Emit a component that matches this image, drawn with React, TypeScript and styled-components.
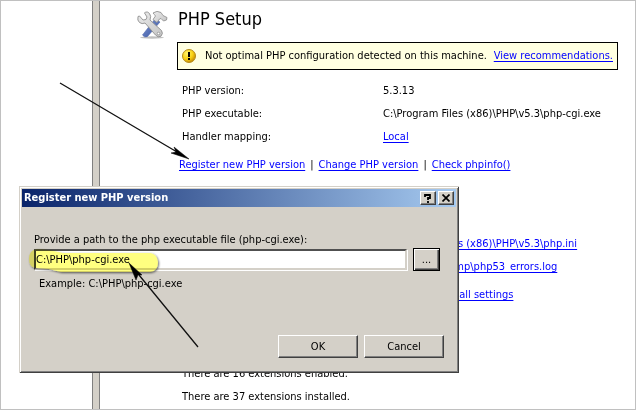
import React from "react";
import styled, { createGlobalStyle, css } from "styled-components";

const font = '"DejaVu Sans Condensed", "DejaVu Sans", sans-serif';

const GlobalStyle = createGlobalStyle`
  * { box-sizing: border-box; }
  body { margin: 0; background: #fff; color: #000; font: 11px/16px ${font}; }
  h1, h2, p, dl, dd { margin: 0; }
  button, input { font: inherit; color: inherit; }
`;

const Page = styled.div`
  position: relative;
  display: grid;
  grid-template-columns: 91px 8px minmax(0, 1fr);
  min-height: 100vh;
  border: 1px solid #c0c0c0;
  overflow: hidden;
  white-space: nowrap;
`;

const Splitter = styled.div`
  background: #d4d0c8;
  border: solid #808080;
  border-width: 0 1px;
`;

const Feature = styled.main`
  display: grid;
  grid-template-columns: 32px minmax(0, 1fr);
  column-gap: 9px;
  padding: 5px 17px 0 36px;
  align-content: start;
`;

const ToolsIcon = styled.svg`
  margin-top: 3px;
`;

const Title = styled.h1`
  padding-left: 1px;
  font-size: 18px;
  line-height: 26px;
  font-weight: 400;
`;

const Banner = styled.p`
  display: flex;
  align-items: center;
  height: 28px;
  margin: 10px 0 9px;
  padding: 0 4px;
  border: 1px solid #000;
  background: #ffffe1;

  svg { margin-right: 9px; }
  a { margin-left: auto; }
`;

const Link = styled.a`
  color: #00f;
  text-decoration: underline;
  text-underline-offset: 2px;
`;

const Properties = styled.dl`
  padding-left: 5px;
`;

const Property = styled.div`
  display: grid;
  grid-template-columns: 201px minmax(0, 1fr);
  line-height: 23px;
`;

const Tasks = styled.p<{ $inset?: boolean }>`
  display: flex;
  gap: ${(p) => (p.$inset ? 4 : 5)}px;
  padding: 5px 0 4px ${(p) => (p.$inset ? 5 : 2)}px;
  line-height: 23px;
`;

const Heading = styled.h2`
  padding: 16px 0 12px 5px;
  font-size: 12px;
  line-height: 24px;
  font-weight: 700;
`;

const Fact = styled.p`
  padding-left: 5px;
  line-height: 23px;
`;

const raised = css`
  border: 1px solid;
  border-color: #fff #404040 #404040 #fff;
  box-shadow: inset -1px -1px #808080;
  background: #d4d0c8;
`;

const Dialog = styled.form`
  position: absolute;
  left: 18px;
  top: 185px;
  width: 440px;
  padding: 3px 3px 15px;
  background: #d4d0c8;
  box-shadow: inset 1px 1px #d4d0c8, inset -1px -1px #404040, inset 2px 2px #fff, inset -2px -2px #808080;
`;

const TitleBar = styled.header`
  display: flex;
  align-items: center;
  gap: 2px;
  height: 18px;
  padding: 0 2px;
  background: linear-gradient(90deg, #0a246a, #a6caf0);
  color: #fff;

  h2 { flex: 1; font: inherit; font-weight: 700; }
`;

const CaptionButton = styled.button`
  ${raised}
  display: grid;
  place-items: center;
  width: 16px;
  height: 14px;
  padding: 0;
  color: #000;
`;

const DialogBody = styled.div`
  padding: 25px 12px 0;
`;

const Field = styled.div`
  display: flex;
  align-items: center;
  gap: 6px;
  padding-right: 4px;

  input {
    flex: 1;
    min-width: 0;
    height: 21px;
    padding: 0;
    outline: 0;
    background: #fff;
    border: 2px solid;
    border-color: #505050 #d4d0c8 #d4d0c8 #404040;
    box-shadow: 1px 1px #fff;
  }
`;

const BrowseButton = styled.button`
  width: 27px;
  height: 23px;
  padding: 0;
  border: 1px solid #000;
  background: #d4d0c8;
  box-shadow: inset 1px 1px #fff, inset -1px -1px #404040, inset -2px -2px #808080;
`;

const Hint = styled.p`
  padding: 5px 5px 0;
`;

const Actions = styled.div`
  display: flex;
  justify-content: flex-end;
  gap: 6px;
  margin-top: 43px;
`;

const ActionButton = styled.button`
  ${raised}
  width: 80px;
  height: 23px;
  padding: 0;
`;

const Markup = styled.svg<{ $blend?: boolean }>`
  position: absolute;
  inset: 0;
  width: 100%;
  height: 100%;
  pointer-events: none;
  mix-blend-mode: ${(p) => (p.$blend ? "multiply" : "normal")};
`;

function Tools() {
  return (
    <ToolsIcon width="32" height="32" viewBox="0 0 32 32" aria-hidden="true">
      <defs>
        <linearGradient id="steel" x1="0" y1="0" x2="1" y2="1">
          <stop offset="0" stopColor="#ececec" />
          <stop offset="1" stopColor="#c4c4c4" />
        </linearGradient>
        <linearGradient id="grip" x1="0" y1="0" x2="1" y2="1">
          <stop offset="0" stopColor="#7d97d6" />
          <stop offset="1" stopColor="#38529c" />
        </linearGradient>
      </defs>
      <ellipse cx="16" cy="28.500" rx="12" ry="1.200" fill="#000" opacity=".25" />
      <path d="M19 10l5 3L11.500 27.500q-3 1.500-5-1.500z" fill="url(#grip)" stroke="#5068ac" strokeWidth=".6" />
      <path d="M17 4q4-3 8-.5l2 3 4 2-.5 2.500-3 1-2.500-2.500-1.500.5-2.500 3.500-4-3 2.500-3.500q-1-1.500-2.500-3z" fill="url(#steel)" stroke="#8a8a8a" strokeWidth=".8" />
      <path d="M9.500 3l-1 1 2.500 4-1 2.500-3 .5-3.500-4-1.500.5q-1 4 1.500 6 2.500 2 5.500.5L19.500 26q2.500 3 5.500 1.200 2.500-2.700.5-5.700L14 11q1.500-4-.5-6.500-1.500-2-4-1.500z" fill="url(#steel)" stroke="#8f8f8f" strokeWidth=".9" />
      <circle cx="22.500" cy="24.500" r="1.300" fill="#fff" stroke="#888" strokeWidth=".7" />
    </ToolsIcon>
  );
}

function Alert() {
  return (
    <svg width="14" height="14" viewBox="0 0 14 14" aria-hidden="true">
      <defs>
        <radialGradient id="gold" cx=".35" cy=".3" r=".8">
          <stop offset="0" stopColor="#fff56a" />
          <stop offset=".55" stopColor="#f8d010" />
          <stop offset="1" stopColor="#b87800" />
        </radialGradient>
      </defs>
      <circle cx="7" cy="7" r="6.500" fill="url(#gold)" stroke="#b48a18" />
      <path d="M6 3h2v5H6zM6 9h2v2H6z" fill="#000" />
    </svg>
  );
}

export default function App() {
  return (
    <>
      <GlobalStyle />
      <Page>
        <aside />
        <Splitter />
        <Feature>
          <Tools />
          <div>
            <Title>PHP Setup</Title>
            <Banner>
              <Alert />
              <span>Not optimal PHP configuration detected on this machine.</span>
              <Link href="#recommendations">View recommendations.</Link>
            </Banner>
            <Properties>
              <Property><dt>PHP version:</dt><dd>5.3.13</dd></Property>
              <Property><dt>PHP executable:</dt><dd>C:\Program Files (x86)\PHP\v5.3\php-cgi.exe</dd></Property>
              <Property><dt>Handler mapping:</dt><dd><Link href="#mapping">Local</Link></dd></Property>
            </Properties>
            <Tasks>
              <Link href="#register">Register new PHP version</Link>|
              <Link href="#change">Change PHP version</Link>|
              <Link href="#phpinfo">Check phpinfo()</Link>
            </Tasks>
            <Heading>PHP Settings</Heading>
            <Properties>
              <Property><dt>Configuration file:</dt><dd><Link href="#ini">C:\Program Files (x86)\PHP\v5.3\php.ini</Link></dd></Property>
              <Property><dt>Error log:</dt><dd><Link href="#log">C:\Windows\Temp\php53_errors.log</Link></dd></Property>
            </Properties>
            <Tasks $inset>
              <Link href="#errors">Configure error reporting</Link>|
              <Link href="#limits">Set runtime limits</Link>|
              <Link href="#settings">Manage all settings</Link>
            </Tasks>
            <Heading>PHP Extensions</Heading>
            <Fact>There are 16 extensions enabled.</Fact>
            <Fact>There are 37 extensions installed.</Fact>
          </div>
        </Feature>

        <Dialog role="dialog" aria-labelledby="dialog-title" onSubmit={(e) => e.preventDefault()}>
          <TitleBar>
            <h2 id="dialog-title">Register new PHP version</h2>
            <CaptionButton type="button" aria-label="Help">
              <svg width="8" height="9" viewBox="0 0 8 9"><path d="M1 3V1h5v3H4v2M4 7v2" fill="none" stroke="#000" strokeWidth="1.800" /></svg>
            </CaptionButton>
            <CaptionButton type="button" aria-label="Close">
              <svg width="8" height="8" viewBox="0 0 8 8"><path d="M.5.5l7 7M7.500.5l-7 7" stroke="#000" strokeWidth="1.700" /></svg>
            </CaptionButton>
          </TitleBar>
          <DialogBody>
            <label htmlFor="php-path">Provide a path to the php executable file (php-cgi.exe):</label>
            <Field>
              <input id="php-path" type="text" defaultValue="C:\PHP\php-cgi.exe" />
              <BrowseButton type="button" aria-label="Browse">...</BrowseButton>
            </Field>
            <Hint>Example: C:\PHP\php-cgi.exe</Hint>
            <Actions>
              <ActionButton type="submit">OK</ActionButton>
              <ActionButton type="button">Cancel</ActionButton>
            </Actions>
          </DialogBody>
        </Dialog>

        <Markup $blend aria-hidden="true">
          <defs>
            <filter id="shade" x="-10%" y="-30%" width="120%" height="170%">
              <feDropShadow dx="1" dy="1" stdDeviation="1.200" floodColor="#000" floodOpacity=".6" />
            </filter>
          </defs>
          <path d="M36 248Q28 249 28 258 28 267 36 267L48 268 60 271H149Q157 270 157 261 156 253 149 252H62L48 249Z" fill="#ffff80" filter="url(#shade)" />
        </Markup>
        <Markup aria-hidden="true">
          <path d="M59 82L176 151M197 346L138 274" stroke="#111" strokeWidth="1.300" />
          <path d="M188 158L170 152 175 151 173 146ZM128 262L141 274 137 274 135 279Z" fill="#000" stroke="#000" strokeWidth=".5" />
        </Markup>
      </Page>
    </>
  );
}
